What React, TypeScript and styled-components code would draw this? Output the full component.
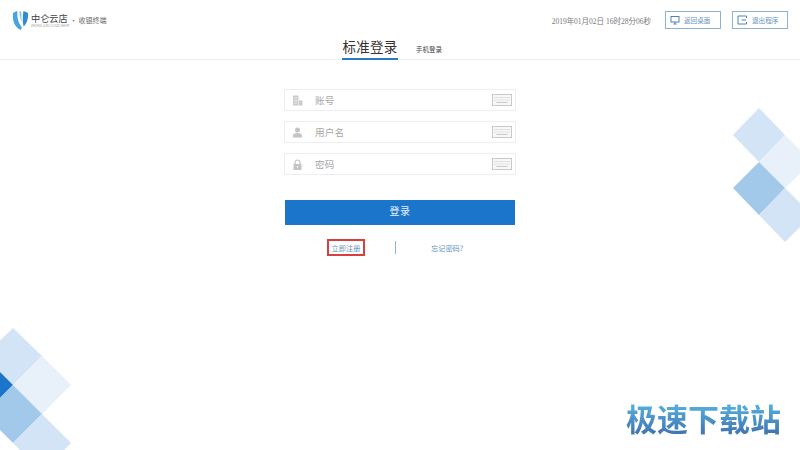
import React from "react";
import styled, { createGlobalStyle } from "styled-components";

const cjk = `"Noto Sans CJK SC", "Liberation Sans", sans-serif`;

const Global = createGlobalStyle`
  html, body { margin: 0; padding: 0; background: #fff; }
  body { font-family: ${cjk}; overflow: hidden; }
`;

const Page = styled.div`
  position: relative;
  width: 800px;
  height: 450px;
  overflow: hidden;
  background: #fff;
`;

const TopBar = styled.header`
  height: 38px;
  display: flex;
  align-items: center;
  justify-content: space-between;
  padding: 2px 12px 0 12px;
  box-sizing: border-box;
`;

const Brand = styled.div`
  display: flex;
  align-items: center;
  gap: 2px;
`;

const BrandWords = styled.div`
  display: flex;
  flex-direction: column;
  width: 38px;
`;

const BrandName = styled.span`
  font-size: 9.2px;
  line-height: 11px;
  color: #3d4043;
  white-space: nowrap;
`;

const BrandSub = styled.span`
  font-family: "Liberation Sans", sans-serif;
  font-size: 3px;
  line-height: 4px;
  color: #9a9a9a;
  white-space: nowrap;
`;

const BrandTag = styled.span`
  font-size: 7px;
  color: #666;
  margin-left: -1px;
  white-space: nowrap;
`;

const Actions = styled.div`
  display: flex;
  align-items: center;
`;

const Clock = styled.span`
  font-family: "Liberation Serif", ${cjk};
  font-size: 7.5px;
  color: #777;
  margin-right: 14px;
  white-space: nowrap;
`;

const ActionButton = styled.button`
  width: 56px;
  height: 18px;
  margin-left: 11px;
  &:first-of-type { margin-left: 0; }
  padding: 0 0 0 4px;
  display: flex;
  align-items: center;
  gap: 4px;
  background: #fff;
  border: 1px solid #8fb3cf;
  color: #5f93bd;
  font-family: ${cjk};
  font-size: 6.6px;
  box-sizing: border-box;
`;

const Tabs = styled.nav`
  height: 22px;
  display: flex;
  justify-content: center;
  gap: 18px;
  padding-right: 16px;
  border-bottom: 1px solid #eef0f2;
  box-sizing: border-box;
`;

const Tab = styled.div<{ $active?: boolean }>`
  height: 22px;
  box-sizing: border-box;
  display: flex;
  align-items: center;
  justify-content: center;
  width: ${(p) => (p.$active ? "56px" : "26px")};
  font-size: ${(p) => (p.$active ? "13.5px" : "6.6px")};
  letter-spacing: ${(p) => (p.$active ? "0.3px" : "0")};
  color: ${(p) => (p.$active ? "#333" : "#444")};
  padding-bottom: ${(p) => (p.$active ? "4px" : "1px")};
  border-bottom: ${(p) => (p.$active ? "2px solid #2b78c5" : "none")};
  white-space: nowrap;
`;

const Form = styled.main`
  width: 232px;
  margin: 29px auto 0;
  display: flex;
  flex-direction: column;
  gap: 10px;
`;

const Field = styled.div`
  height: 22px;
  box-sizing: border-box;
  border: 1px solid #eceef0;
  display: flex;
  align-items: center;
  padding: 0 3px 0 6px;
`;

const FieldIcon = styled.span`
  width: 12px;
  height: 12px;
  display: flex;
  align-items: center;
  justify-content: center;
  flex: none;
`;

const FieldLabel = styled.span`
  margin-left: 12px;
  padding-bottom: 1px;
  flex: 1;
  font-size: 9.6px;
  color: #a8a8a8;
  letter-spacing: 0.2px;
`;

const Submit = styled.button`
  width: 230px;
  height: 25px;
  margin: 15px auto 0;
  padding: 0 0 4px;
  border: none;
  background: #1b75cb;
  color: #e8f2fb;
  font-family: ${cjk};
  font-size: 10px;
  letter-spacing: 0.5px;
`;

const Links = styled.div`
  margin-top: 4px;
  height: 17px;
  display: flex;
  align-items: center;
  padding-left: 43px;
`;

const RegisterLink = styled.span`
  width: 38px;
  height: 17px;
  box-sizing: border-box;
  border: 2px solid #d8403f;
  display: flex;
  align-items: center;
  justify-content: center;
  color: #5f93bd;
  font-size: 7.2px;
  white-space: nowrap;
`;

const Divider = styled.span`
  width: 1px;
  height: 13px;
  margin-left: 30px;
  background: #8fb6d6;
`;

const ForgotLink = styled.span`
  margin-left: 35px;
  color: #5f93bd;
  font-size: 7.2px;
  white-space: nowrap;
`;

const Decor = styled.svg<{ $side: "left" | "right" }>`
  position: absolute;
  top: 0;
  ${(p) => p.$side}: 0;
  width: 100px;
  height: 450px;
`;

const Watermark = styled.div`
  position: absolute;
  left: 626px;
  top: 395px;
  font-size: 31px;
  line-height: 46px;
  font-weight: 700;
  white-space: nowrap;
  background: linear-gradient(180deg, #56b0de 20%, #4279b4 80%);
  -webkit-background-clip: text;
  background-clip: text;
  color: transparent;
`;

const Shield = () => (
  <svg width="17" height="21" viewBox="0 0 17 21">
    <path d="M1 3 C2.5 2 4 1.5 5.5 1 C5 6 5.5 12 10 17.5 L8.5 20 C3 17 0 11 1 3Z" fill="#4aa3e0" />
    <path d="M7.5 1 C9.5 1.5 9.8 3 9.5 5 C9.2 8 9.5 10 10.5 12.5 C9 11 7.2 6 7.5 1Z" fill="#8cc6ec" />
    <path d="M11.5 1 C13 1.5 15 2.2 16 3 C16.5 9 14.5 14 11.5 16.5 C10.5 11 10.5 6 11.5 1Z" fill="#2f8bd3" />
  </svg>
);

const MonitorIcon = () => (
  <svg width="10" height="10" viewBox="0 0 10 10" fill="none" stroke="#4f82ab" strokeWidth="1">
    <rect x="1" y="1.5" width="8" height="5.5" />
    <path d="M3.5 9h3M5 7v2" />
  </svg>
);

const ExitIcon = () => (
  <svg width="11" height="10" viewBox="0 0 11 10" fill="none" stroke="#4f82ab" strokeWidth="1">
    <path d="M9.5 3V1H1v8h8.5V7" />
    <path d="M4.5 5H9" />
  </svg>
);

const BuildingIcon = () => (
  <svg width="11" height="11" viewBox="0 0 11 11" fill="#cbcbcb">
    <path d="M1 0.5h5.5v10H1zM7 5.5h3.5v5H7z" />
    <path d="M2.3 2.5h3v1h-3zM2.3 5h3v1h-3zM2.3 7.5h3v1h-3z" fill="#eee" />
  </svg>
);

const UserIcon = () => (
  <svg width="11" height="11" viewBox="0 0 11 11" fill="#c4c4c4">
    <circle cx="5.5" cy="3" r="2.5" />
    <path d="M1 10.5V8.5C1 7 3 6 5.5 6S10 7 10 8.5v2z" />
  </svg>
);

const LockIcon = () => (
  <svg width="11" height="11" viewBox="0 0 11 11">
    <path d="M3 5V3.5a2.5 2.5 0 0 1 5 0V5" fill="none" stroke="#c4c4c4" strokeWidth="1.2" />
    <rect x="1.5" y="5" width="8" height="6" fill="#c4c4c4" />
    <rect x="5" y="7" width="1" height="2" fill="#f2f2f2" />
  </svg>
);

const KeyboardIcon = () => (
  <svg width="20" height="12" viewBox="0 0 20 12" fill="none" stroke="#c9c9c9">
    <rect x="0.5" y="0.5" width="19" height="11" fill="#f7f7f7" />
    <path d="M2.5 3.5h15M2.5 6h15" strokeDasharray="1 1" />
    <path d="M4.5 8.5h11" />
  </svg>
);

const fields = [
  { label: "账号", icon: <BuildingIcon /> },
  { label: "用户名", icon: <UserIcon /> },
  { label: "密码", icon: <LockIcon /> },
];

export default function App() {
  return (
    <Page>
      <Global />
      <Decor $side="right" viewBox="700 0 100 450">
        <polygon points="759,108 785,135 759,162 733,135" fill="#d2e4f6" />
        <polygon points="785,135 812,162 785,188 759,162" fill="#e8f0fa" />
        <polygon points="759,162 785,188 759,215 733,188" fill="#a2c8ea" />
        <polygon points="785,188 812,215 785,242 759,215" fill="#d2e4f6" />
      </Decor>
      <Decor $side="left" viewBox="0 0 100 450">
        <polygon points="13,328 42,356 13,385 -16,356" fill="#d2e4f6" />
        <polygon points="42,356 71,385 42,414 13,385" fill="#e8f0fa" />
        <polygon points="-16,356 13,385 -16,414 -45,385" fill="#1b75cb" />
        <polygon points="13,385 42,414 13,443 -16,414" fill="#a2c8ea" />
        <polygon points="42,414 71,443 42,472 13,443" fill="#d2e4f6" />
      </Decor>
      <TopBar>
        <Brand>
          <Shield />
          <BrandWords>
            <BrandName>中仑云店</BrandName>
            <BrandSub>ZHONG LUN CLOUD SHOP</BrandSub>
          </BrandWords>
          <BrandTag>· 收银终端</BrandTag>
        </Brand>
        <Actions>
          <Clock>2019年01月02日 16时28分06秒</Clock>
          <ActionButton><MonitorIcon />返回桌面</ActionButton>
          <ActionButton><ExitIcon />退出程序</ActionButton>
        </Actions>
      </TopBar>
      <Tabs>
        <Tab $active>标准登录</Tab>
        <Tab>手机登录</Tab>
      </Tabs>
      <Form>
        {fields.map((f) => (
          <Field key={f.label}>
            <FieldIcon>{f.icon}</FieldIcon>
            <FieldLabel>{f.label}</FieldLabel>
            <KeyboardIcon />
          </Field>
        ))}
        <Submit>登录</Submit>
        <Links>
          <RegisterLink>立即注册</RegisterLink>
          <Divider />
          <ForgotLink>忘记密码?</ForgotLink>
        </Links>
      </Form>
      <Watermark>极速下载站</Watermark>
    </Page>
  );
}
